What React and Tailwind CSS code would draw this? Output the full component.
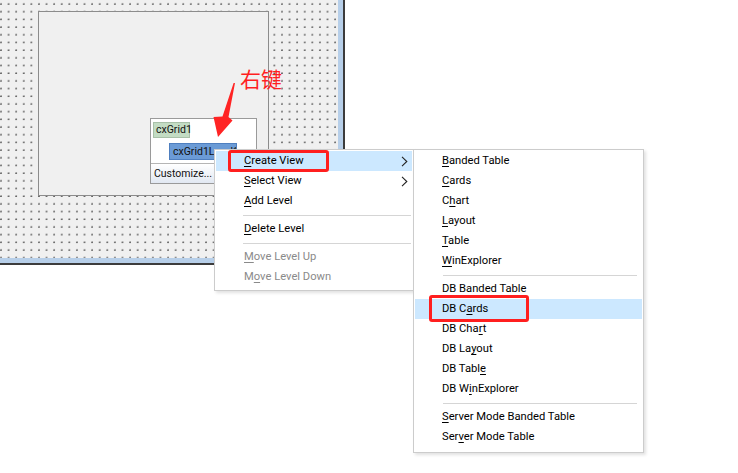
import React from 'react';

const font = { fontFamily: 'Roboto, "Noto Sans", sans-serif' };

function Chevron() {
  return (
    <svg width="7" height="11" viewBox="0 0 7 11" className="shrink-0">
      <path d="M1 0.8 L5.8 5.5 L1 10.2" fill="none" stroke="#222" strokeWidth="1.1" />
    </svg>
  );
}

// label with one underlined mnemonic character
function Label({ text, at }) {
  if (at < 0) return <span>{text}</span>;
  return (
    <span>
      {text.slice(0, at)}
      <span className="underline underline-offset-2 decoration-1">{text[at]}</span>
      {text.slice(at + 1)}
    </span>
  );
}

function Item({ text, at, active, disabled, sub, pad }) {
  return (
    <div
      className={`h-[20px] flex items-center justify-between pr-[4px] text-[11.2px] leading-none ${pad} ${active ? 'bg-[#cce8ff]' : ''} ${disabled ? 'text-[#8a8a8a]' : 'text-black'}`}
    >
      <Label text={text} at={at} />
      {sub && <Chevron />}
    </div>
  );
}

function Sep({ cls }) {
  return (
    <div className="h-[8px] flex items-center">
      <div className={`h-px bg-[#d5d5d5] w-full ${cls}`} />
    </div>
  );
}

export default function App() {
  const subTop = [
    ['Banded Table', 0],
    ['Cards', 0],
    ['Chart', 1],
    ['Layout', 0],
    ['Table', 0],
    ['WinExplorer', 0],
  ];
  const subDb = [
    ['DB Banded Table', -1],
    ['DB Cards', 4],
    ['DB Chart', 6],
    ['DB Layout', 5],
    ['DB Table', 7],
    ['DB WinExplorer', 4],
  ];

  return (
    <div className="w-[738px] h-[473px] relative overflow-hidden bg-white" style={font}>
      {/* Form designer */}
      <div className="w-[345px] h-[265px] border-r-2 border-b-2 border-[#3c3c3c]">
        <div className="w-full h-full border-r-[5px] border-b-[5px] border-[#b7cfe9]">
          <div className="relative w-full h-full bg-[#f0f0f0] bg-[radial-gradient(circle_at_1px_4px,#666_0.6px,transparent_1px)] bg-size-[7.6px_7.7px]">
            {/* cxGrid box */}
            <div className="absolute left-[38px] top-[11px] w-[231px] h-[185px] bg-[#f0f0f0] border border-[#8c8c8c]" />
            {/* level structure panel */}
            <div className="absolute left-[150px] top-[118px] w-[107px] h-[66px] bg-white border border-[#9a9a9a] flex flex-col">
              <div className="ml-[2px] mt-[3px] w-[37px] h-[16px] bg-[#c3dcc3] border border-[#a8c0a8] text-[10.5px] flex items-center pl-[2px] text-[#111]">
                cxGrid1
              </div>
              <div className="ml-[18px] mt-[5px] w-[68px] h-[17px] bg-[#6b9bd6] border border-[#4f7fbf] text-[10.5px] flex items-center pl-[3px] text-[#111] overflow-hidden whitespace-nowrap">
                cxGrid1Level1
              </div>
              <div className="mt-[3px] h-px bg-[#b5b5b5]" />
              <div className="flex-1 flex items-center pl-[3px] text-[10.5px] text-[#111] bg-gradient-to-b from-white to-[#e2e8f2]">
                Customize...
              </div>
            </div>
          </div>
        </div>
      </div>

      {/* annotation */}
      <svg className="absolute left-0 top-0" width="300" height="150" viewBox="0 0 300 150">
        <polygon points="235,83 228.5,117 232.5,120.5 218,137 213.5,117 222.5,116.5 233.6,83" fill="#ff2424" />
      </svg>
      <div className="absolute left-[240px] top-[68px] text-[21px] leading-none font-normal text-[#ff1f1f]" style={{ fontFamily: '"Noto Sans CJK SC", sans-serif' }}>
        右键
      </div>

      {/* context menu */}
      <div className="absolute left-[214px] top-[149px] w-[200px] bg-white border border-[#cccccc] px-px pt-px pb-[3px] shadow-[2px_2px_3px_rgba(0,0,0,0.12)] z-10">
        <Item text="Create View" at={0} active sub pad="pl-[28px]" />
        <Item text="Select View" at={0} sub pad="pl-[28px]" />
        <Item text="Add Level" at={0} pad="pl-[28px]" />
        <Sep cls="ml-[27px] mr-[1px]" />
        <Item text="Delete Level" at={0} pad="pl-[28px]" />
        <Sep cls="ml-[27px] mr-[1px]" />
        <Item text="Move Level Up" at={0} disabled pad="pl-[28px]" />
        <Item text="Move Level Down" at={1} disabled pad="pl-[28px]" />
      </div>

      {/* sub menu */}
      <div className="absolute left-[413px] top-[149px] w-[231px] bg-white border border-[#cccccc] px-px pt-px pb-[5px] shadow-[2px_2px_3px_rgba(0,0,0,0.12)] z-20">
        {subTop.map(([t, a]) => (
          <Item key={t} text={t} at={a} pad="pl-[27px]" />
        ))}
        <Sep cls="ml-[28px] mr-[5px]" />
        {subDb.map(([t, a]) => (
          <Item key={t} text={t} at={a} active={t === 'DB Cards'} pad="pl-[27px]" />
        ))}
        <Sep cls="ml-[28px] mr-[5px]" />
        <Item text="Server Mode Banded Table" at={0} pad="pl-[27px]" />
        <Item text="Server Mode Table" at={3} pad="pl-[27px]" />
      </div>

      {/* highlight boxes */}
      <div className="absolute left-[228px] top-[150px] w-[101px] h-[22px] border-[3px] border-[#ff1f1f] rounded-[3px] z-30" />
      <div className="absolute left-[429px] top-[295px] w-[100px] h-[27px] border-[3px] border-[#ff1f1f] rounded-[3px] z-30" />
    </div>
  );
}
